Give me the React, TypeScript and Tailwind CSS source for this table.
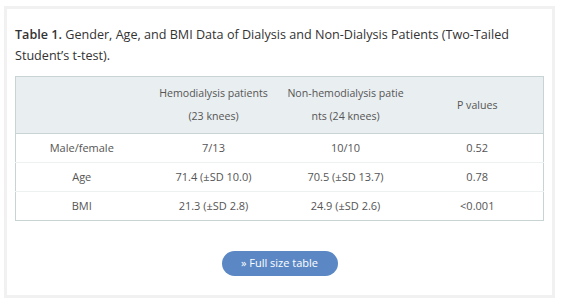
import React from 'react';

const rows = [
  ['Male/female', '7/13', '10/10', '0.52'],
  ['Age', '71.4 (±SD 10.0)', '70.5 (±SD 13.7)', '0.78'],
  ['BMI', '21.3 (±SD 2.8)', '24.9 (±SD 2.6)', '<0.001'],
];

export default function App() {
  return (
    <div className="bg-white w-[563px] h-[305px] pl-[4px] pt-[6px]" style={{ fontFamily: '"Open Sans", sans-serif' }}>
      <div className="w-[551px] h-[292px] border-[3px] border-[#f1f1f1] px-[8px] pt-[15px]">
        <p className="text-[12.6px] leading-[21px] text-[#333]">
          <span className="font-semibold">Table 1.</span> Gender, Age, and BMI Data of Dialysis and Non-Dialysis Patients (Two-Tailed Student’s t-test).
        </p>

        <table className="mt-[10px] w-full table-fixed border border-[#c8d3d3] text-[11px] text-[#555]">
          <thead>
            <tr className="bg-[#e9eef0] h-[57px] text-[10.6px] leading-[23px]">
              <th className="w-1/4 font-normal" />
              <th className="w-1/4 font-normal whitespace-nowrap">
                Hemodialysis patients
                <br />
                (23 knees)
              </th>
              <th className="w-1/4 font-normal whitespace-nowrap">
                Non-hemodialysis patie
                <br />
                nts (24 knees)
              </th>
              <th className="w-1/4 font-normal">P values</th>
            </tr>
          </thead>
          <tbody>
            {rows.map((r, i) => (
              <tr key={i} className={`h-[29px] border-t ${i > 0 ? 'border-[#eef1f1]' : 'border-[#c8d3d3]'}`}>
                {r.map((c, j) => (
                  <td key={j} className="text-center">
                    {c}
                  </td>
                ))}
              </tr>
            ))}
          </tbody>
        </table>

        <div className="flex justify-center mt-[30px]">
          <button className="w-[116px] h-[25px] rounded-full bg-[#5b88c4] text-white text-[11px]">
            » Full size table
          </button>
        </div>
      </div>
    </div>
  );
}
